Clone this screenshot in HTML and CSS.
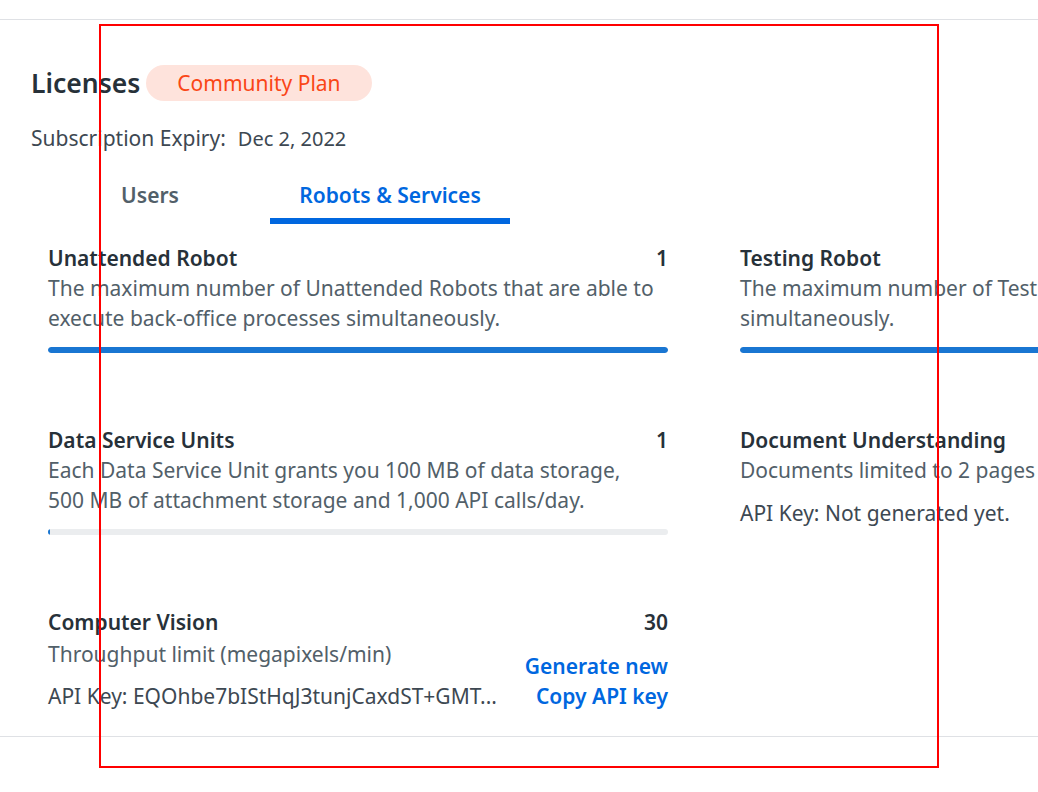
FILE: index.html
```html
<!DOCTYPE html>
<html lang="en">
<head>
<meta charset="utf-8">
<title>Licenses</title>
<link rel="stylesheet" href="styles.css">
</head>
<body>
<div class="page">
  <div class="header">
    <h1 class="title">Licenses</h1>
    <span class="badge">Community Plan</span>
  </div>
  <div class="expiry">
    <span class="expiry-label">Subscription Expiry:</span>
    <span class="expiry-date">Dec 2, 2022</span>
  </div>
  <div class="tabs">
    <div class="tab">Users</div>
    <div class="tab active">Robots &amp; Services</div>
  </div>
  <div class="grid">
    <div class="card">
      <div class="card-head"><span class="card-title">Unattended Robot</span><span class="card-count">1</span></div>
      <div class="card-desc">The maximum number of Unattended Robots that are able to execute back-office processes simultaneously.</div>
      <div class="bar"><div class="bar-fill" style="width:100%"></div></div>
    </div>
    <div class="card">
      <div class="card-head"><span class="card-title">Testing Robot</span><span class="card-count">1</span></div>
      <div class="card-desc"><span class="nowrap">The maximum number of Testing Robots that are able to execute test cases</span><br>simultaneously.</div>
      <div class="bar"><div class="bar-fill" style="width:100%"></div></div>
    </div>
    <div class="card">
      <div class="card-head"><span class="card-title">Data Service Units</span><span class="card-count">1</span></div>
      <div class="card-desc">Each Data Service Unit grants you 100 MB of data storage, 500 MB of attachment storage and 1,000 API calls/day.</div>
      <div class="bar"><div class="bar-fill" style="width:0.3%"></div></div>
    </div>
    <div class="card">
      <div class="card-head"><span class="card-title">Document Understanding</span></div>
      <div class="card-desc nowrap">Documents limited to 2 pages per document</div>
      <div class="api-key">API Key: Not generated yet.</div>
    </div>
    <div class="card">
      <div class="card-head"><span class="card-title">Computer Vision</span><span class="card-count">30</span></div>
      <div class="cv-body">
        <div class="cv-left">
          <div class="card-desc">Throughput limit (megapixels/min)</div>
          <div class="api-key">API Key: EQOhbe7bIStHqJ3tunjCaxdST+GMT...</div>
        </div>
        <div class="cv-links">
          <a class="link" href="#">Generate new</a>
          <a class="link" href="#">Copy API key</a>
        </div>
      </div>
    </div>
  </div>
</div>
<div class="highlight"></div>
</body>
</html>
```

FILE: styles.css
```css
html, body {
  margin: 0;
  padding: 0;
  background: #ffffff;
  overflow: hidden;
}
body {
  font-family: "Noto Sans", "Open Sans", sans-serif;
  color: #273139;
  width: 1038px;
  height: 792px;
  position: relative;
}
.page {
  margin-top: 19px;
  border-top: 1px solid #dfe1e5;
  border-bottom: 1px solid #dfe1e5;
  padding: 45px 0 25px 31px;
  overflow: hidden;
}
.header {
  display: flex;
  align-items: center;
  height: 36px;
  gap: 6px;
}
.title {
  margin: 0;
  font-size: 26.5px;
  font-weight: 600;
  line-height: 36px;
  color: #273139;
}
.badge {
  display: inline-flex;
  align-items: center;
  height: 36px;
  padding: 0 31px;
  border-radius: 18px;
  background: #fee3dc;
  color: #fa4616;
  font-size: 21px;
}
.expiry {
  margin-top: 22px;
  display: flex;
  align-items: center;
  height: 30px;
  gap: 12px;
  color: #3d4852;
}
.expiry-label {
  font-size: 21px;
}
.expiry-date {
  font-size: 20px;
}
.tabs {
  display: flex;
  margin-top: 27px;
  margin-left: -1px;
}
.tab {
  width: 240px;
  text-align: center;
  font-size: 21px;
  font-weight: 600;
  line-height: 30px;
  padding-bottom: 8px;
  border-bottom: 6px solid transparent;
  color: #526069;
}
.tab.active {
  color: #0067df;
  border-bottom-color: #0067df;
}
.grid {
  display: grid;
  grid-template-columns: 620px 620px;
  column-gap: 72px;
  row-gap: 72px;
  margin-top: 19px;
  margin-left: 17px;
  width: 1312px;
}
.card-head {
  display: flex;
  justify-content: space-between;
  align-items: center;
  height: 30px;
}
.card-title {
  font-size: 21px;
  font-weight: 600;
  color: #273139;
}
.card-count {
  font-size: 21px;
  font-weight: 600;
  color: #273139;
}
.card-desc {
  font-size: 21px;
  line-height: 30px;
  color: #526069;
  padding-right: 10px;
}
.nowrap {
  white-space: nowrap;
}
.bar {
  margin-top: 14px;
  height: 6px;
  border-radius: 3px;
  background: #ebedef;
  overflow: hidden;
}
.bar-fill {
  height: 100%;
  border-radius: 3px;
  background: #1976d2;
}
.api-key {
  margin-top: 13px;
  font-size: 21px;
  line-height: 30px;
  color: #3d4852;
}
.cv-body {
  display: flex;
  justify-content: space-between;
  align-items: flex-end;
  margin-top: 2px;
}
.cv-left .card-desc {
  padding-right: 0;
}
.cv-left .api-key {
  margin-top: 12px;
}
.cv-links {
  display: flex;
  flex-direction: column;
  align-items: flex-end;
}
.link {
  font-size: 21px;
  font-weight: 600;
  line-height: 30px;
  color: #0067df;
  text-decoration: none;
}
.highlight {
  position: absolute;
  left: 99px;
  top: 24px;
  width: 840px;
  height: 744px;
  box-sizing: border-box;
  border: 2px solid #ff0000;
  pointer-events: none;
}
```
